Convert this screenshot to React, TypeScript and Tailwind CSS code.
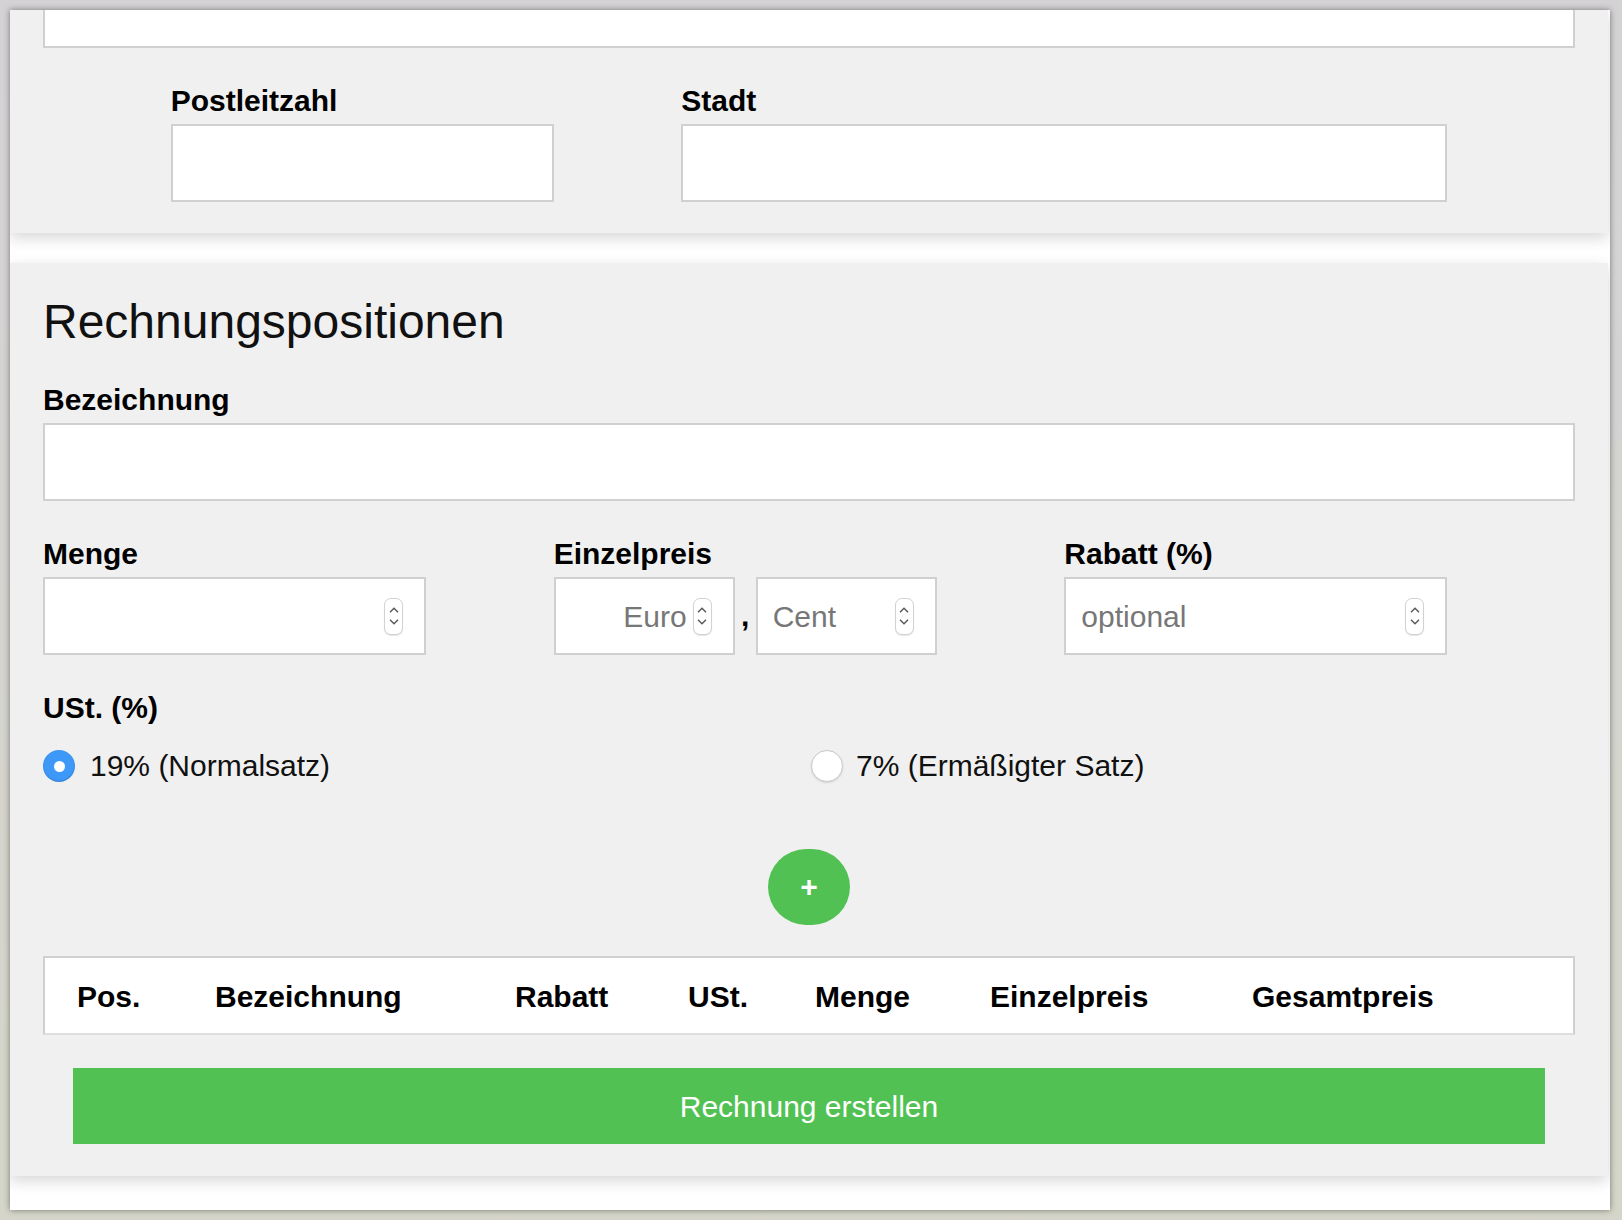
import type { ReactNode } from 'react';

function Spinner() {
  return (
    <div className="flex h-[37px] w-[19px] shrink-0 flex-col items-center justify-center gap-[6px] rounded-[7px] border border-[#d2d2d2] bg-white shadow-[0_1px_1px_rgba(0,0,0,0.1)]">
      <svg width="10" height="6" viewBox="0 0 10 6">
        <path d="M1 5.2L5 1.2L9 5.2" fill="none" stroke="#5a5a5a" strokeWidth="1.5" />
      </svg>
      <svg width="10" height="6" viewBox="0 0 10 6">
        <path d="M1 0.8L5 4.8L9 0.8" fill="none" stroke="#5a5a5a" strokeWidth="1.5" />
      </svg>
    </div>
  );
}

function Field({ label, className, children }: { label: string; className?: string; children: ReactNode }) {
  return (
    <div className={className}>
      <label className="mb-[6px] block pt-[2px] text-[30px] font-bold leading-[34px] text-black">{label}</label>
      {children}
    </div>
  );
}

function TextBox() {
  return <input type="text" className="block h-[78px] w-full border-2 border-[#d0d0d0] bg-white px-[16px] text-[30px] outline-none" />;
}

function NumberBox({ placeholder, alignRight }: { placeholder?: string; alignRight?: boolean }) {
  return (
    <div className="flex h-[78px] w-full items-center border-2 border-[#d0d0d0] bg-white pr-[21px]">
      <input
        type="text"
        placeholder={placeholder}
        className={`min-w-0 flex-1 bg-transparent pl-[15px] text-[30px] text-black outline-none placeholder:text-[#777777] ${
          alignRight ? 'pr-[6px] text-right' : ''
        }`}
      />
      <Spinner />
    </div>
  );
}

function Radio({ checked, label, className }: { checked?: boolean; label: string; className?: string }) {
  return (
    <label className={`flex items-center text-[30px] leading-[34px] text-[#111] ${className ?? ''}`}>
      {checked ? (
        <span className="flex h-[32px] w-[32px] items-center justify-center rounded-full bg-[#3d98f7] shadow-[inset_0_-1px_2px_rgba(0,0,0,0.15)]">
          <span className="h-[11px] w-[11px] rounded-full bg-white" />
        </span>
      ) : (
        <span className="h-[32px] w-[32px] rounded-full border border-[#c9c9c9] bg-white shadow-[0_1px_2px_rgba(0,0,0,0.12)]" />
      )}
      <span>{label}</span>
    </label>
  );
}

const columns = [
  { label: 'Pos.', width: 'w-[138px]' },
  { label: 'Bezeichnung', width: 'w-[300px]' },
  { label: 'Rabatt', width: 'w-[173px]' },
  { label: 'USt.', width: 'w-[127px]' },
  { label: 'Menge', width: 'w-[175px]' },
  { label: 'Einzelpreis', width: 'w-[262px]' },
  { label: 'Gesamtpreis', width: '' },
];

export default function App() {
  return (
    <div className="h-[1220px] w-[1622px] overflow-hidden bg-linear-to-b from-[#d5d2d6] to-[#d5d6c9] pl-[10px] pt-[10px] font-['Liberation_Sans',Arial,sans-serif]">
      <div className="flex h-[1200px] w-[1600px] flex-col overflow-hidden bg-white shadow-[0_0_6px_rgba(0,0,0,0.45)]">
        {/* Adresse (unterer Teil) */}
        <section className="relative z-10 mr-[2px] bg-[#f0f0f0] px-[33px] pb-[31px] shadow-[0_5px_14px_rgba(0,0,0,0.16)]">
          <div className="h-[38px] border-x-2 border-b-2 border-[#d0d0d0] bg-white" />
          <div className="grid grid-cols-12 pt-[34px]">
            <Field label="Postleitzahl" className="col-span-3 col-start-2">
              <TextBox />
            </Field>
            <Field label="Stadt" className="col-span-6 col-start-6">
              <TextBox />
            </Field>
          </div>
        </section>

        {/* Rechnungspositionen */}
        <section className="relative z-10 mr-[2px] mt-[30px] bg-[#f0f0f0] px-[33px] pb-[32px] pt-[31px] shadow-[0_5px_14px_rgba(0,0,0,0.16)]">
          <h2 className="text-[48px] font-normal leading-[56px] text-[#111]">Rechnungspositionen</h2>

          <Field label="Bezeichnung" className="mt-[31px]">
            <TextBox />
          </Field>

          <div className="mt-[34px] grid grid-cols-12">
            <Field label="Menge" className="col-span-3">
              <NumberBox />
            </Field>
            <Field label="Einzelpreis" className="col-span-3 col-start-5">
              <div className="flex items-center">
                <div className="w-[181px]">
                  <NumberBox placeholder="Euro" alignRight />
                </div>
                <span className="w-[22px] text-center text-[30px] font-bold leading-[34px]">,</span>
                <div className="w-[181px]">
                  <NumberBox placeholder="Cent" />
                </div>
              </div>
            </Field>
            <Field label="Rabatt (%)" className="col-span-3 col-start-9">
              <NumberBox placeholder="optional" />
            </Field>
          </div>

          <div className="mt-[36px] text-[30px] font-bold leading-[34px] text-black">USt. (%)</div>
          <div className="mt-[24px] grid grid-cols-12">
            <div className="col-span-6">
              <Radio checked label="19% (Normalsatz)" className="gap-[15px]" />
            </div>
            <div className="col-span-6 pl-[2px]">
              <Radio label="7% (Ermäßigter Satz)" className="gap-[13px]" />
            </div>
          </div>

          <div className="mt-[66px] flex justify-center">
            <button className="flex h-[76px] w-[82px] items-center justify-center rounded-full bg-[#51c153] text-[30px] font-bold leading-none text-white">
              +
            </button>
          </div>

          <div className="mt-[31px] flex h-[79px] items-center border-2 border-[#d0d0d0] border-b-[#dedede] bg-white pl-[32px] pt-[3px]">
            {columns.map((col) => (
              <span key={col.label} className={`${col.width} text-[30px] font-bold leading-[34px] text-black`}>
                {col.label}
              </span>
            ))}
          </div>

          <div className="mt-[33px] px-[30px]">
            <button className="block h-[76px] w-full bg-[#51c153] text-[30px] text-white">Rechnung erstellen</button>
          </div>
        </section>
      </div>
    </div>
  );
}
